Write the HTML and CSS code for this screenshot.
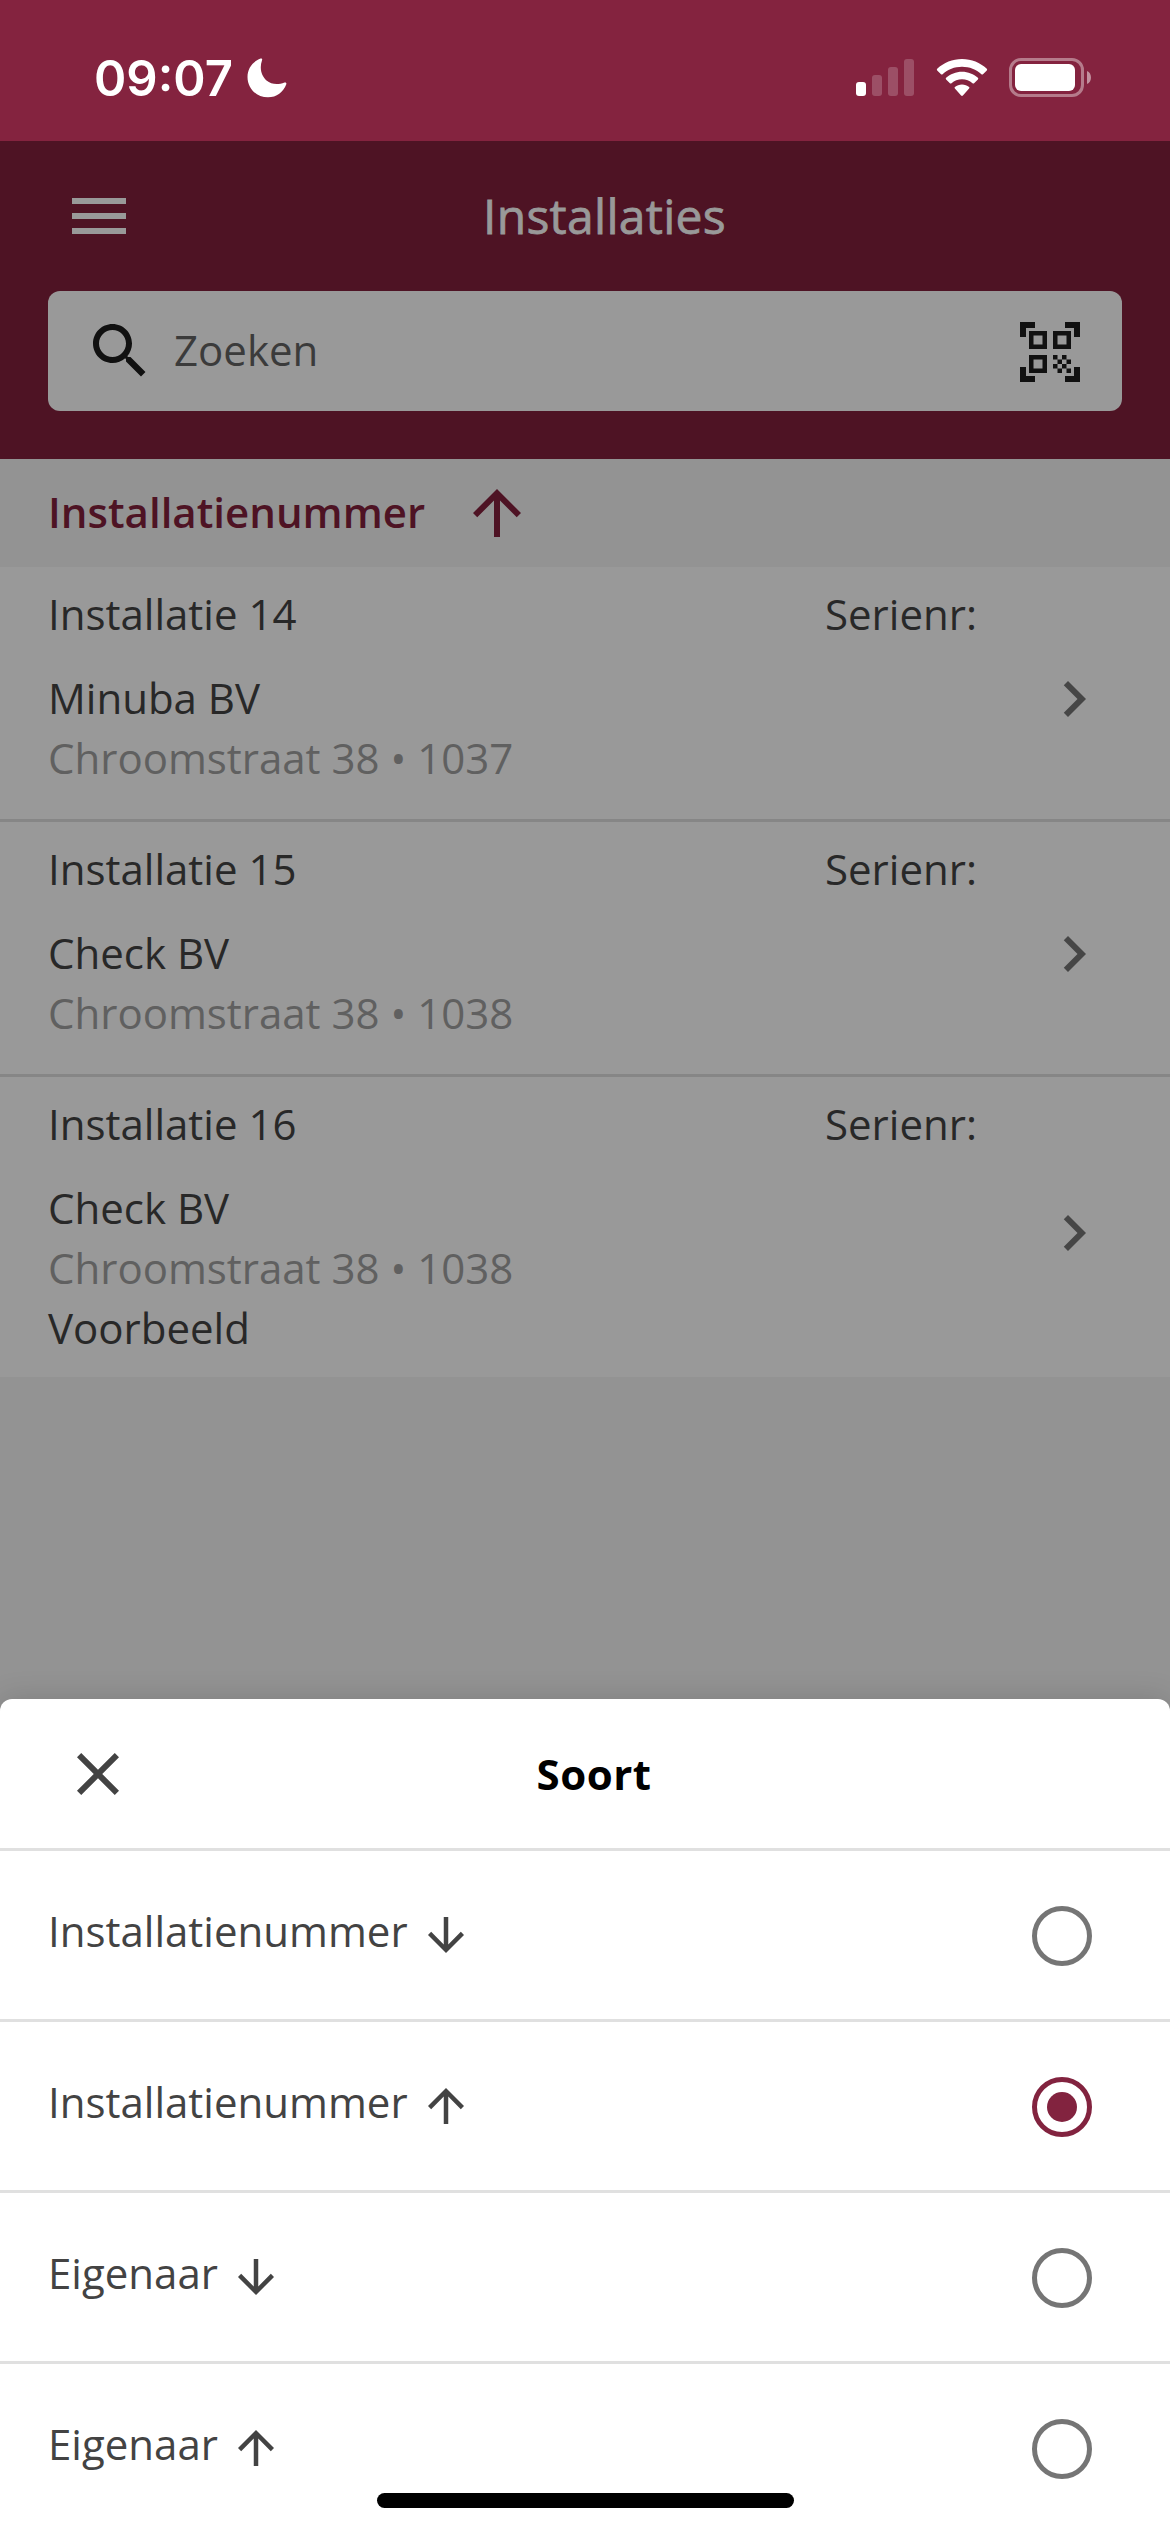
FILE: index.html
```html
<!DOCTYPE html>
<html lang="nl">
<head>
<meta charset="utf-8">
<title>Installaties</title>
<link rel="stylesheet" href="styles.css">
</head>
<body>
<div class="screen">
  <div class="status">
    <div class="status-left">
      <span class="time">09:07</span>
      <svg class="moon" width="40" height="40" viewBox="0 0 40 40"><path d="M13.6 .6C14.600 .2 15.500 .900 15.100 1.900C12.100 10.500 14.500 18 19.500 22.500C24.500 26.600 31 27 37.500 24.500C38.800 24.100 39.700 25 39.300 26.200C36.500 34 29.500 39.300 21 39.300C9.500 39.300 .5 30.500 .5 19C.5 10.500 5.500 3.500 13.600 .6Z"/></svg>
    </div>
    <div class="status-right">
      <svg class="signal" width="58" height="38" viewBox="0 0 58 38"><rect y="23" width="10" height="14" rx="3"/><g opacity=".2"><rect x="16" y="16" width="10" height="21" rx="3"/><rect x="32" y="8" width="10" height="29" rx="3"/><rect x="48" width="10" height="37" rx="3"/></g></svg>
      <svg class="wifi" width="52" height="38" viewBox="0 0 52 38"><path d="M26 0C35.500 0 44.300 3.600 50.800 9.800Q51.600 10.600 50.800 11.500L47 15.200Q46.200 15.900 45.400 15.200C40.200 10.500 33.500 7.800 26 7.800S11.800 10.500 6.600 15.200Q5.800 15.900 5 15.200L1.200 11.500Q.4 10.600 1.200 9.800C7.700 3.600 16.500 0 26 0ZM26 12.700C32.100 12.700 37.700 15 41.900 18.800Q42.700 19.600 41.900 20.400L38.100 24.200Q37.300 24.900 36.500 24.200C33.700 21.700 30 20.300 26 20.300S18.300 21.700 15.500 24.200Q14.700 24.900 13.900 24.200L10.100 20.400Q9.300 19.600 10.100 18.800C14.300 15 19.900 12.700 26 12.700ZM26 25.500C28.700 25.500 31.200 26.400 33.100 28Q33.900 28.800 33.100 29.600L26.900 36.500Q26 37.300 25.100 36.500L18.900 29.600Q18.100 28.800 18.900 28C20.800 26.400 23.300 25.500 26 25.500Z"/></svg>
      <svg width="83" height="39" viewBox="0 0 83 39"><rect x="1.500" y="1.500" width="72" height="36" rx="10.500" fill="none" stroke="#fff" stroke-opacity=".4" stroke-width="3"/><rect x="6" y="6" width="60" height="27" rx="6"/><path d="M78 13C83.300 15 83.300 24 78 26Z" opacity=".5"/></svg>
    </div>
  </div>

  <header class="header">
    <div class="bar">
      <svg class="icon menu" viewBox="0 0 24 24"><path d="M3 18h18v-2H3v2zm0-5h18v-2H3v2zm0-7v2h18V6H3z"/></svg>
      <h1 class="title">Installaties</h1>
    </div>
    <div class="search">
      <svg class="icon" viewBox="0 0 24 24"><path d="M15.500 14h-.79l-.28-.27C15.410 12.590 16 11.110 16 9.500 16 5.910 13.090 3 9.500 3S3 5.910 3 9.500 5.910 16 9.500 16c1.610 0 3.090-.59 4.230-1.570l.27.28v.79l5 4.990L20.490 19l-4.990-5zm-6 0C7.010 14 5 11.990 5 9.500S7.010 5 9.500 5 14 7.010 14 9.500 11.990 14 9.500 14z"/></svg>
      <span class="placeholder">Zoeken</span>
      <svg class="icon" viewBox="0 0 24 24"><path d="M9.500 6.500v3h-3v-3h3M11 5H5v6h6V5zm-1.500 9.500v3h-3v-3h3M11 13H5v6h6v-6zm6.500-6.500v3h-3v-3h3M19 5h-6v6h6V5zm-6 8h1.500v1.500H13V13zm1.500 1.500H16V16h-1.500v-1.500zM16 13h1.500v1.500H16V13zm-3 3h1.500v1.500H13V16zm1.500 1.500H16V19h-1.500v-1.500zM16 16h1.500v1.500H16V16zm1.500-1.500H19V16h-1.500v-1.500zm0 3H19V19h-1.500v-1.500zM22 7h-2V4h-3V2h5v5zm0 15v-5h-2v3h-3v2h5zM2 22h5v-2H4v-3H2v5zM2 2v5h2V4h3V2H2z"/></svg>
    </div>
  </header>

  <div class="sort">
    <span class="sort-label">Installatienummer</span>
    <svg class="icon" viewBox="0 0 24 24"><path d="M4 12l1.410 1.410L11 7.830V20h2V7.830l5.580 5.590L20 12l-8-8-8 8z"/></svg>
  </div>

  <main class="list">
    <div class="row">
      <div class="info"><p class="name">Installatie 14</p><p>Minuba BV</p><p class="address">Chroomstraat 38 • 1037</p></div>
      <p class="serial">Serienr:</p>
      <svg class="icon chevron" viewBox="0 0 24 24"><path d="M10 6L8.590 7.410 13.170 12l-4.580 4.590L10 18l6-6z"/></svg>
    </div>
    <div class="row">
      <div class="info"><p class="name">Installatie 15</p><p>Check BV</p><p class="address">Chroomstraat 38 • 1038</p></div>
      <p class="serial">Serienr:</p>
      <svg class="icon chevron" viewBox="0 0 24 24"><path d="M10 6L8.590 7.410 13.170 12l-4.580 4.590L10 18l6-6z"/></svg>
    </div>
    <div class="row">
      <div class="info"><p class="name">Installatie 16</p><p>Check BV</p><p class="address">Chroomstraat 38 • 1038</p><p>Voorbeeld</p></div>
      <p class="serial">Serienr:</p>
      <svg class="icon chevron" viewBox="0 0 24 24"><path d="M10 6L8.590 7.410 13.170 12l-4.580 4.590L10 18l6-6z"/></svg>
    </div>
  </main>

  <section class="sheet">
    <div class="sheet-head">
      <svg class="icon" viewBox="0 0 24 24"><path d="M19 6.410L17.590 5 12 10.590 6.410 5 5 6.410 10.590 12 5 17.590 6.410 19 12 13.410 17.590 19 19 17.590 13.410 12z"/></svg>
      <h2 class="sheet-title">Soort</h2>
    </div>
    <div class="option">
      <span class="label">Installatienummer</span>
      <svg class="arrow" viewBox="0 0 24 24"><path d="M20 12l-1.410-1.410L13 16.170V4h-2v12.170l-5.580-5.590L4 12l8 8 8-8z"/></svg>
      <span class="radio"></span>
    </div>
    <div class="option">
      <span class="label">Installatienummer</span>
      <svg class="arrow" viewBox="0 0 24 24"><path d="M4 12l1.410 1.410L11 7.830V20h2V7.830l5.580 5.590L20 12l-8-8-8 8z"/></svg>
      <span class="radio checked"></span>
    </div>
    <div class="option">
      <span class="label">Eigenaar</span>
      <svg class="arrow" viewBox="0 0 24 24"><path d="M20 12l-1.410-1.410L13 16.170V4h-2v12.170l-5.580-5.590L4 12l8 8 8-8z"/></svg>
      <span class="radio"></span>
    </div>
    <div class="option">
      <span class="label">Eigenaar</span>
      <svg class="arrow" viewBox="0 0 24 24"><path d="M4 12l1.410 1.410L11 7.830V20h2V7.830l5.580 5.590L20 12l-8-8-8 8z"/></svg>
      <span class="radio"></span>
    </div>
    <div class="home"></div>
  </section>
</div>
</body>
</html>
```
FILE: styles.css
```css
* { box-sizing: border-box; }

body {
  margin: 0;
  font-family: "Open Sans", "Noto Sans", sans-serif;
  font-size: 42px;
  line-height: 60px;
  color: #282828;
}

h1, h2, p { margin: 0; }
svg { display: block; flex: none; fill: currentColor; }
.icon { width: 72px; height: 72px; }

.screen {
  position: relative;
  width: 1170px;
  height: 2532px;
  overflow: hidden;
  background: #939393;
}

/* Status bar */
.status {
  display: flex;
  justify-content: space-between;
  height: 141px;
  padding: 58px 78px 0 94px;
  background: #84233f;
  color: #fff;
}
.status-left { display: flex; gap: 14px; }
.time {
  width: 139px;
  font: 600 49px/41px Inter, sans-serif;
  white-space: nowrap;
}
.status-right { display: flex; gap: 21px; }
.signal, .wifi { margin-top: 1px; }
.signal { margin-right: 1px; }

/* Header */
.header {
  height: 318px;
  padding: 39px 48px 48px;
  background: #4e1324;
  color: #999;
}
.bar {
  display: grid;
  grid-template-columns: 72px 1fr 33px;
  padding: 0 15px;
  height: 111px;
}
.title {
  font-size: 48px;
  font-weight: 500;
  line-height: 72px;
  letter-spacing: .3px;
  -webkit-text-stroke: .8px currentColor;
  text-align: center;
}
.search {
  display: flex;
  align-items: center;
  height: 120px;
  padding: 2px 36px 0;
  border-radius: 12px;
  background: #999;
  color: #111;
}
.search .icon:first-child { margin-top: -2px; }
.placeholder {
  flex: 1;
  margin: -4px 0 0 18px;
  color: #3b3b3b;
}

/* Active sort */
.sort {
  display: flex;
  align-items: center;
  gap: 36px;
  height: 108px;
  padding: 0 48px;
  color: #4e1324;
}
.sort-label { margin-top: -2px; font-weight: 600; }

/* Installation rows */
.list { background: #999; }
.row {
  display: grid;
  grid-template-columns: 777px 213px 72px;
  min-height: 252px;
  padding: 17px 48px 19px;
}
.row + .row { min-height: 255px; border-top: 3px solid #868686; }
.name { margin-bottom: 24px; }
.address { color: #606060; }
.chevron { align-self: center; margin-top: 14px; color: #464646; }

/* Bottom sheet */
.sheet {
  position: absolute;
  left: 0;
  right: 0;
  bottom: 0;
  height: 833px;
  border-radius: 12px 12px 0 0;
  background: #fff;
  color: #434343;
  box-shadow: 0 0 30px rgba(0, 0, 0, .15);
}
.sheet-head {
  display: grid;
  grid-template-columns: 72px 1fr 54px;
  align-items: center;
  height: 149px;
  padding: 0 62px;
}
.sheet-title {
  font-size: 42px;
  font-weight: 700;
  letter-spacing: .5px;
  color: #000;
  text-align: center;
}
.option {
  display: flex;
  align-items: center;
  height: 171px;
  padding: 0 78px 0 48px;
  border-top: 3px solid #e0e0e0;
}
.label { margin-top: -8px; }
.arrow { width: 54px; height: 54px; margin-left: 11px; }
.radio {
  width: 60px;
  height: 60px;
  margin: 2px 0 0 auto;
  border: 5px solid #757575;
  border-radius: 50%;
}
.radio.checked {
  padding: 10px;
  border-color: #82233f;
  background: #82233f content-box;
}
.home {
  position: absolute;
  left: 377px;
  bottom: 24px;
  width: 417px;
  height: 15px;
  border-radius: 8px;
  background: #000;
}
```
